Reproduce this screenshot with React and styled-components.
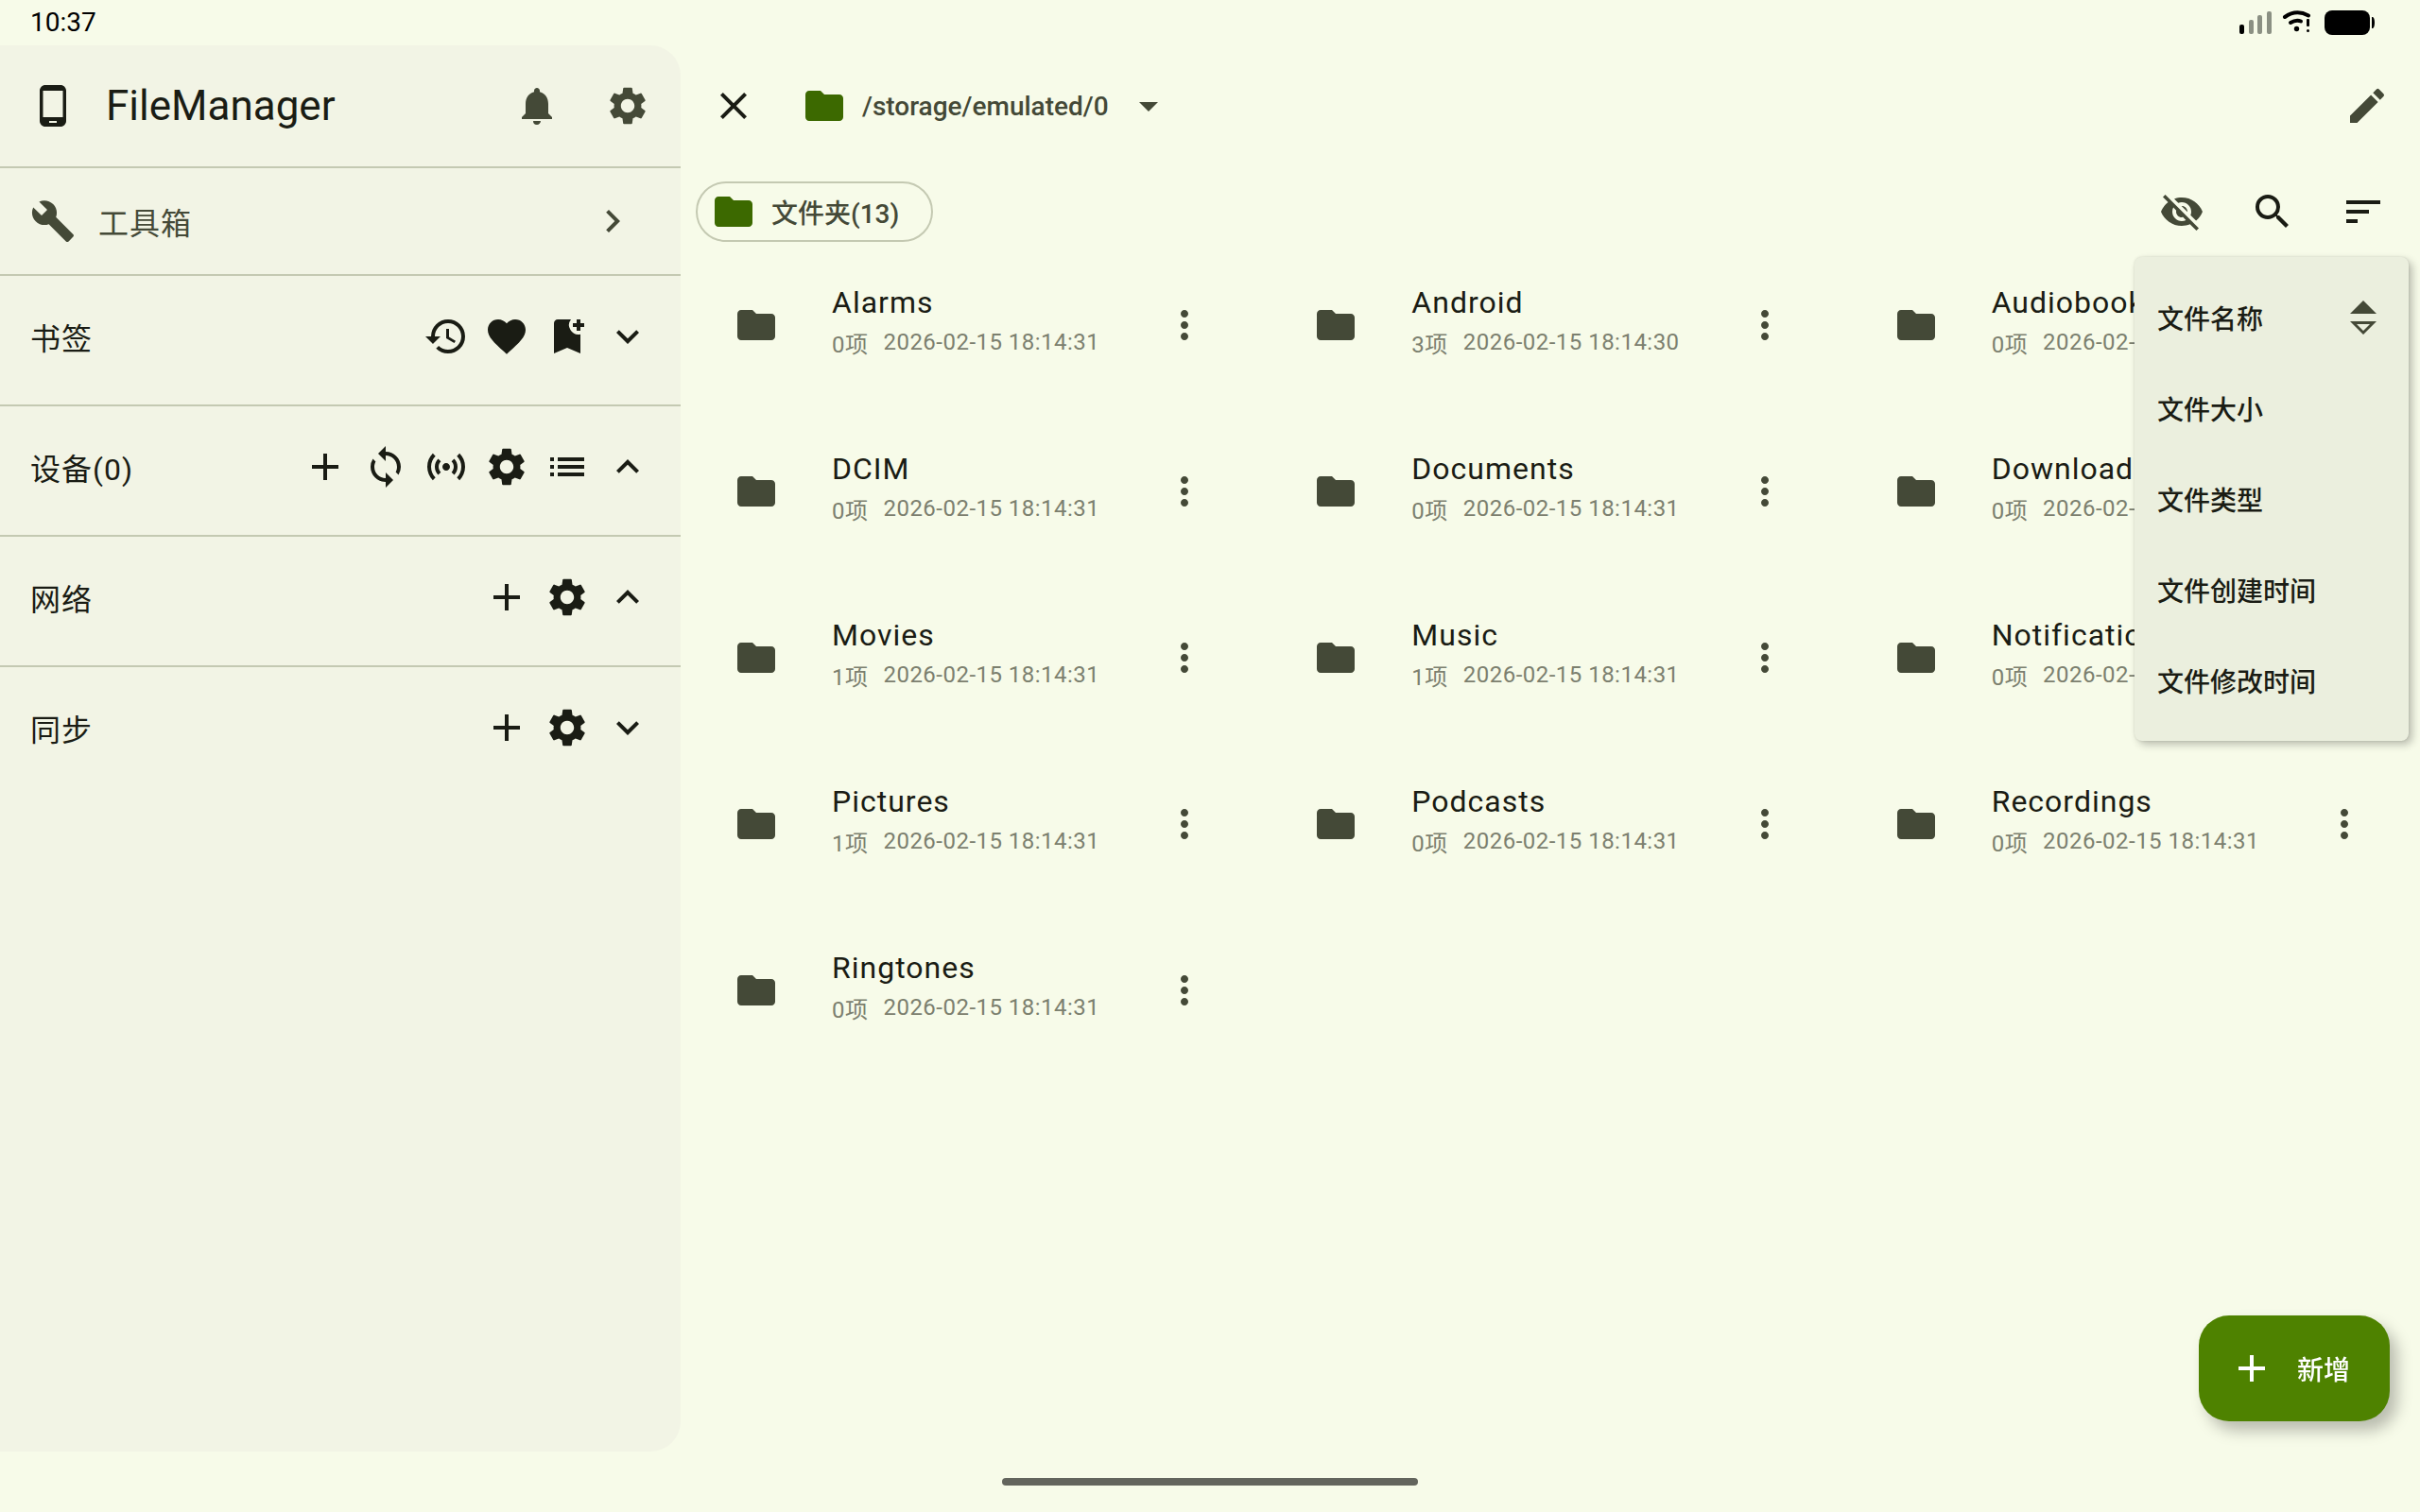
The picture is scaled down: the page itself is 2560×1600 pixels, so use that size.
import { useState } from "react";
import styled, { createGlobalStyle } from "styled-components";
import {
  MdAdd,
  MdArrowDropDown,
  MdBookmarkAdd,
  MdBuild,
  MdChevronRight,
  MdClose,
  MdEdit,
  MdExpandLess,
  MdExpandMore,
  MdFavorite,
  MdFolder,
  MdHistory,
  MdList,
  MdMoreVert,
  MdNotifications,
  MdPhoneAndroid,
  MdSearch,
  MdSensors,
  MdSettings,
  MdSort,
  MdSync,
  MdVisibilityOff,
} from "react-icons/md";

const folders = [
  { name: "Alarms", items: 0, date: "2026-02-15 18:14:31" },
  { name: "Android", items: 3, date: "2026-02-15 18:14:30" },
  { name: "Audiobooks", items: 0, date: "2026-02-15 18:14:31" },
  { name: "DCIM", items: 0, date: "2026-02-15 18:14:31" },
  { name: "Documents", items: 0, date: "2026-02-15 18:14:31" },
  { name: "Download", items: 0, date: "2026-02-15 18:14:31" },
  { name: "Movies", items: 1, date: "2026-02-15 18:14:31" },
  { name: "Music", items: 1, date: "2026-02-15 18:14:31" },
  { name: "Notifications", items: 0, date: "2026-02-15 18:14:31" },
  { name: "Pictures", items: 1, date: "2026-02-15 18:14:31" },
  { name: "Podcasts", items: 0, date: "2026-02-15 18:14:31" },
  { name: "Recordings", items: 0, date: "2026-02-15 18:14:31" },
  { name: "Ringtones", items: 0, date: "2026-02-15 18:14:31" },
];

const sections = [
  {
    title: "书签",
    actions: [
      { label: "历史", icon: MdHistory },
      { label: "收藏", icon: MdFavorite },
      { label: "添加书签", icon: MdBookmarkAdd },
      { label: "展开", icon: MdExpandMore },
    ],
  },
  {
    title: "设备(0)",
    actions: [
      { label: "添加", icon: MdAdd },
      { label: "刷新", icon: MdSync },
      { label: "扫描", icon: MdSensors },
      { label: "设置", icon: MdSettings },
      { label: "列表", icon: MdList },
      { label: "收起", icon: MdExpandLess },
    ],
  },
  {
    title: "网络",
    actions: [
      { label: "添加", icon: MdAdd },
      { label: "设置", icon: MdSettings },
      { label: "收起", icon: MdExpandLess },
    ],
  },
  {
    title: "同步",
    actions: [
      { label: "添加", icon: MdAdd },
      { label: "设置", icon: MdSettings },
      { label: "展开", icon: MdExpandMore },
    ],
  },
];

const sortOptions = [
  "文件名称",
  "文件大小",
  "文件类型",
  "文件创建时间",
  "文件修改时间",
];

const StatusIcons = () => (
  <svg width="146" height="32" viewBox="0 0 146 32" aria-hidden="true">
    <rect x="0" y="18" width="5" height="10" rx="2" />
    <g fill="#8b9083">
      <rect x="10" y="13" width="5" height="15" rx="2" />
      <rect x="19" y="8" width="5" height="20" rx="2" />
      <rect x="29" y="4" width="5" height="24" rx="2" />
    </g>
    <g fill="none" stroke="#000" strokeWidth="4" strokeLinecap="round">
      <path d="M48 10Q60 1.500 73 8.500" />
      <path d="M54 16Q60 12.500 65 14.500" />
    </g>
    <circle cx="60.500" cy="22.500" r="2.700" />
    <rect x="71" y="12" width="3" height="8" rx="1" />
    <circle cx="72.500" cy="24.500" r="1.500" />
    <rect x="90" y="3" width="48" height="26" rx="8" />
    <path d="M140 10h1q2 1 2 6t-2 6h-1z" />
  </svg>
);

const SortArrows = () => (
  <svg width="28" height="36" viewBox="0 0 28 36" aria-hidden="true">
    <path d="M14 0L28 14H0z" fill="currentColor" />
    <path
      d="M0 22h28L14 36zM7 25l7 7 7-7z"
      fill="currentColor"
      fillRule="evenodd"
    />
  </svg>
);

const App = () => {
  const [menuOpen, setMenuOpen] = useState(true);
  const [sortBy, setSortBy] = useState("文件名称");

  return (
    <Screen>
      <GlobalStyle />
      <StatusBar>
        <span>10:37</span>
        <StatusIcons />
      </StatusBar>

      <Body>
        <Sidebar>
          <SideHeader>
            <MdPhoneAndroid />
            <h1>FileManager</h1>
            <IconButton aria-label="通知" $muted>
              <MdNotifications />
            </IconButton>
            <IconButton aria-label="设置" $muted>
              <MdSettings />
            </IconButton>
          </SideHeader>
          <ToolboxRow>
            <MdBuild />
            <span>工具箱</span>
            <MdChevronRight />
          </ToolboxRow>
          {sections.map((section) => (
            <Section key={section.title}>
              <h2>{section.title}</h2>
              <SectionActions>
                {section.actions.map(({ label, icon: Icon }) => (
                  <SmallButton key={label} aria-label={label}>
                    <Icon />
                  </SmallButton>
                ))}
              </SectionActions>
            </Section>
          ))}
        </Sidebar>

        <Main>
          <TopBar>
            <IconButton aria-label="关闭">
              <MdClose />
            </IconButton>
            <PathButton>
              <FolderMark />
              <span>/storage/emulated/0</span>
              <MdArrowDropDown />
            </PathButton>
            <IconButton aria-label="编辑" $muted>
              <MdEdit />
            </IconButton>
          </TopBar>

          <Toolbar>
            <Chip>
              <FolderMark />
              <span>文件夹(13)</span>
            </Chip>
            <ToolbarActions>
              <IconButton aria-label="显示隐藏文件" $muted>
                <MdVisibilityOff />
              </IconButton>
              <IconButton aria-label="搜索">
                <MdSearch />
              </IconButton>
              <IconButton
                aria-label="排序"
                onClick={() => setMenuOpen(!menuOpen)}
              >
                <MdSort />
              </IconButton>
              {menuOpen && (
                <Menu role="menu">
                  {sortOptions.map((option) => (
                    <MenuItem
                      key={option}
                      role="menuitem"
                      onClick={() => setSortBy(option)}
                    >
                      <span>{option}</span>
                      {sortBy === option && <SortArrows />}
                    </MenuItem>
                  ))}
                </Menu>
              )}
            </ToolbarActions>
          </Toolbar>

          <Grid>
            {folders.map((folder) => (
              <Folder key={folder.name}>
                <MdFolder />
                <FolderText>
                  <h3>{folder.name}</h3>
                  <p>
                    <span>{folder.items}项</span>
                    <time>{folder.date}</time>
                  </p>
                </FolderText>
                <SmallButton aria-label="更多" $muted>
                  <MdMoreVert />
                </SmallButton>
              </Folder>
            ))}
          </Grid>
        </Main>
      </Body>

      <NavBar>
        <HomeHandle />
      </NavBar>

      <AddButton>
        <MdAdd />
        <span>新增</span>
      </AddButton>
    </Screen>
  );
};

export default App;

const GlobalStyle = createGlobalStyle`
  * {
    box-sizing: border-box;
  }

  body {
    margin: 0;
    background: #f7fbe9;
    color: #1a1c14;
    font-family: Roboto, "Noto Sans CJK SC", sans-serif;
  }

  h1, h2, h3, p {
    margin: 0;
    font-weight: 400;
  }

  button {
    display: flex;
    align-items: center;
    padding: 0;
    border: none;
    background: none;
    color: inherit;
    font: inherit;
    cursor: pointer;
  }

  svg {
    display: block;
    flex-shrink: 0;
  }
`;

const Screen = styled.div`
  display: flex;
  flex-direction: column;
  min-height: 100vh;
`;

const StatusBar = styled.header`
  display: flex;
  align-items: center;
  justify-content: space-between;
  height: 48px;
  padding: 0 45px 0 32px;
  color: #000;
  font-size: 28px;
  line-height: 32px;
`;

const Body = styled.div`
  display: flex;
  flex: 1;
`;

const Sidebar = styled.aside`
  flex: 0 0 720px;
  border-radius: 0 32px 32px 0;
  background: #f2f4e5;
`;

const IconButton = styled.button`
  justify-content: center;
  width: 96px;
  height: 96px;
  color: ${(props) => (props.$muted ? "#444937" : "inherit")};

  svg {
    width: 48px;
    height: 48px;
  }
`;

const SmallButton = styled(IconButton)`
  width: 48px;
  height: 48px;
`;

const SideHeader = styled.div`
  display: flex;
  align-items: center;
  height: 130px;
  padding: 0 8px 0 32px;
  border-bottom: 2px solid #c4c9b2;

  > svg {
    width: 48px;
    height: 48px;
  }

  h1 {
    flex: 1;
    padding-left: 32px;
    font-size: 44px;
    line-height: 56px;
  }
`;

const ToolboxRow = styled.button`
  && {
    width: 100%;
    height: 114px;
    padding: 0 48px 0 32px;
    border-bottom: 2px solid #c4c9b2;
    color: #444937;
    font-size: 32px;
    letter-spacing: 1px;
    text-align: left;
  }

  svg {
    width: 48px;
    height: 48px;
  }

  span {
    flex: 1;
    padding-left: 24px;
  }
`;

const Section = styled.section`
  display: flex;
  align-items: center;
  justify-content: space-between;
  height: 138px;
  padding: 0 32px 8px;
  border-bottom: 2px solid #c4c9b2;

  &:last-child {
    border-color: transparent;
  }

  h2 {
    font-size: 32px;
    letter-spacing: 1px;
  }
`;

const SectionActions = styled.div`
  display: flex;
  gap: 16px;
`;

const Main = styled.main`
  flex: 1;
  min-width: 0;
`;

const TopBar = styled.div`
  display: flex;
  align-items: center;
  height: 128px;
  padding: 0 8px;

  > :last-child {
    margin-left: auto;
  }
`;

const FolderMark = styled(MdFolder)`
  width: 48px;
  height: 48px;
  color: #3c6900;
`;

const PathButton = styled.button`
  && {
    gap: 16px;
    padding: 0 24px;
    color: #444937;
    font-size: 28px;
    font-weight: 500;
  }

  span {
    padding-right: 2px;
  }

  svg {
    width: 48px;
    height: 48px;
  }
`;

const Toolbar = styled.div`
  display: flex;
  align-items: center;
  justify-content: space-between;
  height: 96px;
  padding: 0 12px 0 16px;
`;

const Chip = styled.button`
  && {
    gap: 16px;
    height: 64px;
    padding: 0 34px 0 14px;
    border: 2px solid #c4c9b2;
    border-radius: 32px;
    color: #444937;
    font-size: 28px;
    font-weight: 500;
  }
`;

const ToolbarActions = styled.div`
  position: relative;
  display: flex;
`;

const Menu = styled.div`
  position: absolute;
  top: 100%;
  right: 0;
  z-index: 1;
  width: 290px;
  padding: 16px 0;
  border-radius: 8px;
  background: #ebefde;
  box-shadow: 4px 4px 8px rgba(0, 0, 0, 0.24), 0 0 3px rgba(0, 0, 0, 0.12);
`;

const MenuItem = styled.button`
  && {
    justify-content: space-between;
    width: 100%;
    height: 96px;
    padding: 0 34px 0 24px;
    font-size: 28px;
    font-weight: 500;
  }

  svg {
    color: #444937;
  }
`;

const Grid = styled.div`
  display: grid;
  grid-template-columns: repeat(3, 1fr);
  row-gap: 32px;
`;

const Folder = styled.article`
  display: flex;
  align-items: center;
  height: 144px;
  padding: 0 56px;

  > svg {
    width: 48px;
    height: 48px;
    color: #444937;
  }
`;

const FolderText = styled.div`
  flex: 1;
  min-width: 0;
  padding: 0 0 12px 56px;

  h3 {
    font-size: 32px;
    line-height: 48px;
    letter-spacing: 1px;
  }

  p {
    display: flex;
    align-items: center;
    gap: 16px;
    height: 36px;
    color: #7c806f;
    font-size: 24px;
    letter-spacing: 0.02em;
  }
`;

const NavBar = styled.footer`
  display: flex;
  align-items: center;
  justify-content: center;
  height: 64px;
`;

const HomeHandle = styled.div`
  width: 440px;
  height: 8px;
  border-radius: 4px;
  background: #63655d;
`;

const AddButton = styled.button`
  && {
    position: fixed;
    right: 32px;
    bottom: 96px;
    gap: 24px;
    height: 112px;
    padding: 0 42px 0 32px;
    border-radius: 32px;
    background: #4e8200;
    box-shadow: 8px 10px 16px rgba(0, 0, 0, 0.25);
    color: #fff;
    font-size: 28px;
    font-weight: 500;
  }

  svg {
    width: 48px;
    height: 48px;
  }
`;
